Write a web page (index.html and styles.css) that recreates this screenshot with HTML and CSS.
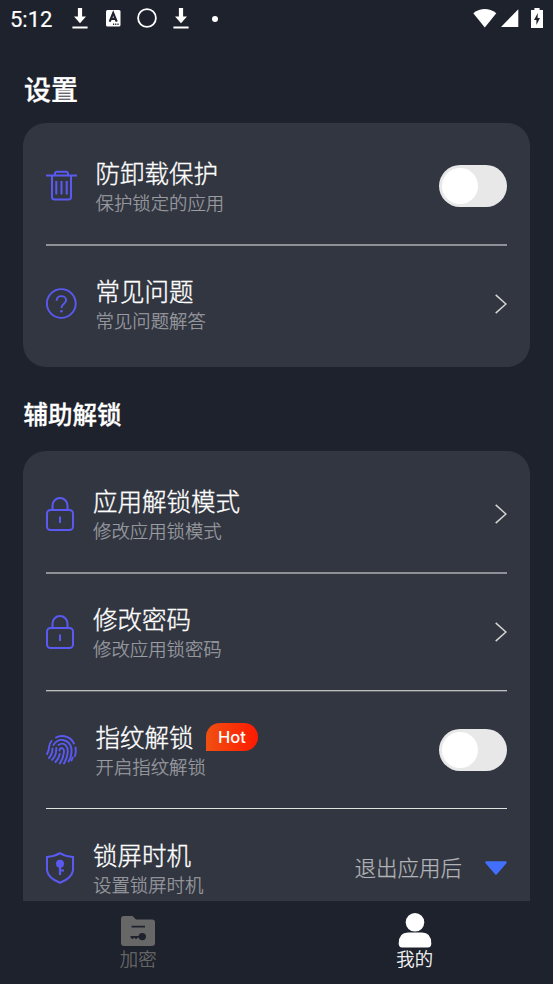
FILE: index.html
```html
<!DOCTYPE html>
<html lang="zh-CN">
<head>
<meta charset="utf-8">
<title>设置</title>
<link rel="stylesheet" href="styles.css">
</head>
<body>
<svg class="defs" width="0" height="0">
  <symbol id="download" viewBox="0 0 16 21"><path d="M5.900 0h4.200v8.600h3.900L8 15.300 2 8.600h3.900zM.4 18.600h15.200v2H.4z" fill="#fff"/></symbol>
  <symbol id="lock" viewBox="0 0 28 34"><g fill="none" stroke="#5a5af2" stroke-width="2"><rect x="1" y="13" width="26" height="20" rx="3.500"/><path d="M6.500 13V8.500a7.500 7.500 0 0 1 15 0V13M14 19.500v6.500"/></g></symbol>
  <symbol id="chevron" viewBox="0 0 12 20"><path d="M.7.9 10.900 10 .7 19.100" fill="none" stroke="#d2d3d2" stroke-width="1.500"/></symbol>
</svg>
<div class="screen">
  <header class="status">
    <span class="clock">5:12</span>
    <svg class="s-download" width="16" height="21"><use href="#download"/></svg>
    <svg class="s-input" width="15" height="17" viewBox="0 0 15 17"><rect width="14.500" height="16.500" rx="1.500" fill="#fff"/><path d="m3.700 11.600 3.500-8.400 3.500 8.400M4.900 8.900h4.600" fill="none" stroke="#1e222d" stroke-width="2.200"/><path d="M7 14.300h1.200m1 0h1.200m1 0h1.200" stroke="#1e222d" stroke-width="1.400"/></svg>
    <svg class="s-circle" width="20" height="20" viewBox="0 0 20 20"><circle cx="10" cy="10" r="8.900" fill="none" stroke="#fff" stroke-width="1.800"/></svg>
    <svg class="s-download2" width="16" height="21"><use href="#download"/></svg>
    <span class="dot"></span>
    <svg class="s-wifi" width="24" height="19" viewBox="0 0 24 19"><path d="M.3 4.200Q11.700-4 23.300 4.200L11.800 18.500z" fill="#fff"/></svg>
    <svg class="s-signal" width="18" height="18" viewBox="0 0 18 18"><path d="M17.300.3V18H0z" fill="#fff"/></svg>
    <svg class="s-battery" width="12" height="20" viewBox="0 0 12 20"><path d="M3.400 0h5.200v2H12v18H0V2h3.400z" fill="#fff"/><path d="M6.800 5 3 12h2.400v5L9 10H6.600z" fill="#1e222d"/></svg>
  </header>
  <main class="content">
    <h1>设置</h1>
    <section class="card">
      <div class="row">
        <svg class="icon" width="31" height="31" viewBox="0 0 31 31"><g fill="none" stroke="#5a5af2" stroke-width="2"><path d="M0 5.500h31M9 5.500v-2A1.800 1.800 0 0 1 10.800 1.700h9.400A1.800 1.800 0 0 1 22 3.500v2M6 5.500v21.500q0 2.500 2.500 2.500h14q2.500 0 2.500-2.500v-21.500"/><path d="M10.300 11v13.500M15.500 11v13.500M20.700 11v13.500"/></g></svg>
        <div class="text wide"><div class="title">防卸载保护</div><div class="sub">保护锁定的应用</div></div>
        <span class="switch"></span>
      </div>
      <hr class="line">
      <div class="row">
        <svg class="icon" width="31" height="31" viewBox="0 0 31 31"><g fill="none" stroke="#5a5af2" stroke-width="1.900"><circle cx="15.300" cy="15.500" r="14.400"/><path d="M10.600 12.700c0-6.200 9.500-5.800 9.500-.4 0 3.600-4.700 3.300-4.700 7.700"/></g><circle cx="15.400" cy="23.200" r="1.300" fill="#5a5af2"/></svg>
        <div class="text wide"><div class="title">常见问题</div><div class="sub">常见问题解答</div></div>
        <svg class="chevron" width="12" height="20"><use href="#chevron"/></svg>
      </div>
    </section>
    <h2>辅助解锁</h2>
    <section class="card card-cut">
      <div class="row">
        <svg class="icon" width="28" height="34"><use href="#lock"/></svg>
        <div class="text"><div class="title">应用解锁模式</div><div class="sub">修改应用锁模式</div></div>
        <svg class="chevron" width="12" height="20"><use href="#chevron"/></svg>
      </div>
      <hr class="line">
      <div class="row">
        <svg class="icon" width="28" height="34"><use href="#lock"/></svg>
        <div class="text"><div class="title">修改密码</div><div class="sub">修改应用锁密码</div></div>
        <svg class="chevron" width="12" height="20"><use href="#chevron"/></svg>
      </div>
      <hr class="line line-soft">
      <div class="row">
        <svg class="icon" width="31" height="30" viewBox="0 0 31 30"><g fill="none" stroke="#5a5af2" stroke-width="1.900" stroke-linecap="round"><path d="M10 2.500Q14 .4 18.500 1.300 25 2.500 28 8.500M29.500 12.500q.8 5-.6 8.500M5.500 6Q3.800 8 3.200 11.500q-.2 4-2.200 7.500"/><path d="M7.500 10Q11 4.200 17 5q7.500 1.500 8.500 9 .3 8-3 12.500M6.500 13.500q0 5.500-3.500 9.500"/><path d="M12.500 10q4-3 7.500.5 2.500 3 1.500 8.500-.7 5-3.500 9.500M10.300 13q0 6-1.800 8.500-1.200 2-2.500 3.300"/><path d="M13.500 15.500q.4-3 2.800-2.300 2.200.8 1.500 5-.7 6-4 10.300M13.800 19q-1 4.500-4.300 8M25.500 25.500l1.200-3"/></g></svg>
        <div class="text wide"><div class="title">指纹解锁<span class="hot">Hot</span></div><div class="sub">开启指纹解锁</div></div>
        <span class="switch"></span>
      </div>
      <hr class="line line-thin">
      <div class="row">
        <svg class="icon" width="28" height="32" viewBox="0 0 28 32"><path d="M14 1.200Q20 4.800 27 5v13.500Q25.500 26.500 14 30.700 2.500 26.500 1 18.500V5Q8 4.800 14 1.200z" fill="none" stroke="#5a5af2" stroke-width="2"/><circle cx="14" cy="11.800" r="4" fill="#5a5af2"/><path d="M14 12v11M14 18.500h4" stroke="#5a5af2" stroke-width="2.200"/></svg>
        <div class="text"><div class="title">锁屏时机</div><div class="sub">设置锁屏时机</div></div>
        <span class="value">退出应用后</span>
        <svg class="caret" width="22" height="14" viewBox="0 0 22 14"><path d="M1.500 1.500h19L11 12.500z" fill="#4270fc" stroke="#4270fc" stroke-width="2.400" stroke-linejoin="round"/></svg>
      </div>
    </section>
  </main>
  <nav class="tabs">
    <div class="tab">
      <svg width="34" height="31" viewBox="0 0 34 31"><path d="M3 0h8.500l3.500 3.500h16q3 0 3 3V27q0 3-3 3H3q-3 0-3-3V3q0-3 3-3z" fill="#676767"/><path d="M10.500 10.700h13.500M9.500 20.800h10M11.500 21v2M15 21v2" stroke="#1e222d" stroke-width="1.800"/><circle cx="21.300" cy="20.600" r="3.700" fill="#1e222d"/></svg>
      <span>加密</span>
    </div>
    <div class="tab active">
      <svg width="34" height="35" viewBox="0 0 34 35"><circle cx="17" cy="9.300" r="9.300" fill="#fff"/><path d="M10 19.500h14q9.300 0 9.300 11 0 4-3.500 4H4.200Q.7 34.500.7 30.500q0-11 9.300-11z" fill="#fff"/></svg>
      <span>我的</span>
    </div>
  </nav>
</div>
</body>
</html>
```

FILE: styles.css
```css
* { box-sizing: border-box; }
body { margin: 0; background: #1e222d; color: #fff; font-family: "Noto Sans CJK SC", sans-serif; font-weight: 300; }
svg { display: block; flex: none; }
.defs { position: absolute; }
.screen { width: 553px; height: 984px; overflow: hidden; display: flex; flex-direction: column; }
.status { height: 37px; flex: none; display: flex; align-items: center; padding: 0 10px; font-family: Roboto, sans-serif; }
.clock { width: 61.500px; font-size: 22px; font-weight: 400; line-height: 37px; padding-top: 2px; -webkit-text-stroke: .2px; }
.s-input { margin-left: 18.500px; }
.s-circle { margin-left: 16px; }
.s-download2 { margin-left: 16px; }
.dot { width: 6px; height: 6px; border-radius: 50%; background: #fff; margin-left: 22.500px; }
.s-wifi { margin-left: auto; }
.s-signal { margin-left: 4px; }
.s-battery { margin-left: 12px; }
.status svg { position: relative; top: -.5px; }
.content { height: 864px; flex: none; overflow: hidden; padding: 0 23px; }
h1 { margin: 0; height: 86px; padding-top: 32px; padding-left: 1px; font-size: 27px; line-height: 40px; font-weight: 500; -webkit-text-stroke: .3px; }
h2 { margin: 0; height: 84px; padding-left: .500px; font-size: 24.500px; line-height: 94px; font-weight: 500; -webkit-text-stroke: .3px; }
.card { background: #323640; border-radius: 23px; padding: 4px 23px; height: 244px; }
.card-cut { height: 500px; }
.row { height: 117px; display: flex; align-items: center; }
.text { margin-left: 19px; padding-top: 5px; flex: 1; white-space: nowrap; }
.text.wide { margin-left: 18.500px; }
.title { font-size: 24.500px; line-height: 28px; height: 29px; padding-bottom: 1px; display: flex; align-items: center; -webkit-text-stroke: .35px; }
.sub { font-size: 18.400px; line-height: 29px; color: #9b9da2; -webkit-text-stroke: .25px; }
.line { border: 0; margin: 0 0 -1px; height: 2px; background: #909196; }
.line-soft { background: linear-gradient(#bdbebf 50%, #62646b 50%); }
.line-thin { margin: 0; height: 1px; background: #dfe3df; }
.switch { width: 68px; height: 42px; border-radius: 21px; background: #e8e8e8; padding: 3px; }
.switch::before { content: ""; display: block; width: 36px; height: 36px; border-radius: 50%; background: #fff; }
.hot { margin-left: 12.500px; margin-bottom: 1px; width: 52px; height: 28px; border-radius: 14px 14px 14px 0; background: linear-gradient(90deg, #f05012, #ff1a00); font: 500 16.500px/28px Inter, sans-serif; text-align: center; -webkit-text-stroke: 0; }
.value { font-size: 21.500px; color: #b2b4b8; margin-right: 23px; margin-top: -2px; -webkit-text-stroke: .25px; }
.tabs { flex: 1; display: flex; }
.tab { flex: 1; display: flex; flex-direction: column; align-items: center; padding-top: 15px; color: #6c6c6c; }
.tab.active { padding-top: 12px; color: #fff; }
.tab span { font-size: 18.400px; line-height: 26px; margin-top: -2px; -webkit-text-stroke: .25px; }
.tab.active span { margin-top: -3px; }
```
